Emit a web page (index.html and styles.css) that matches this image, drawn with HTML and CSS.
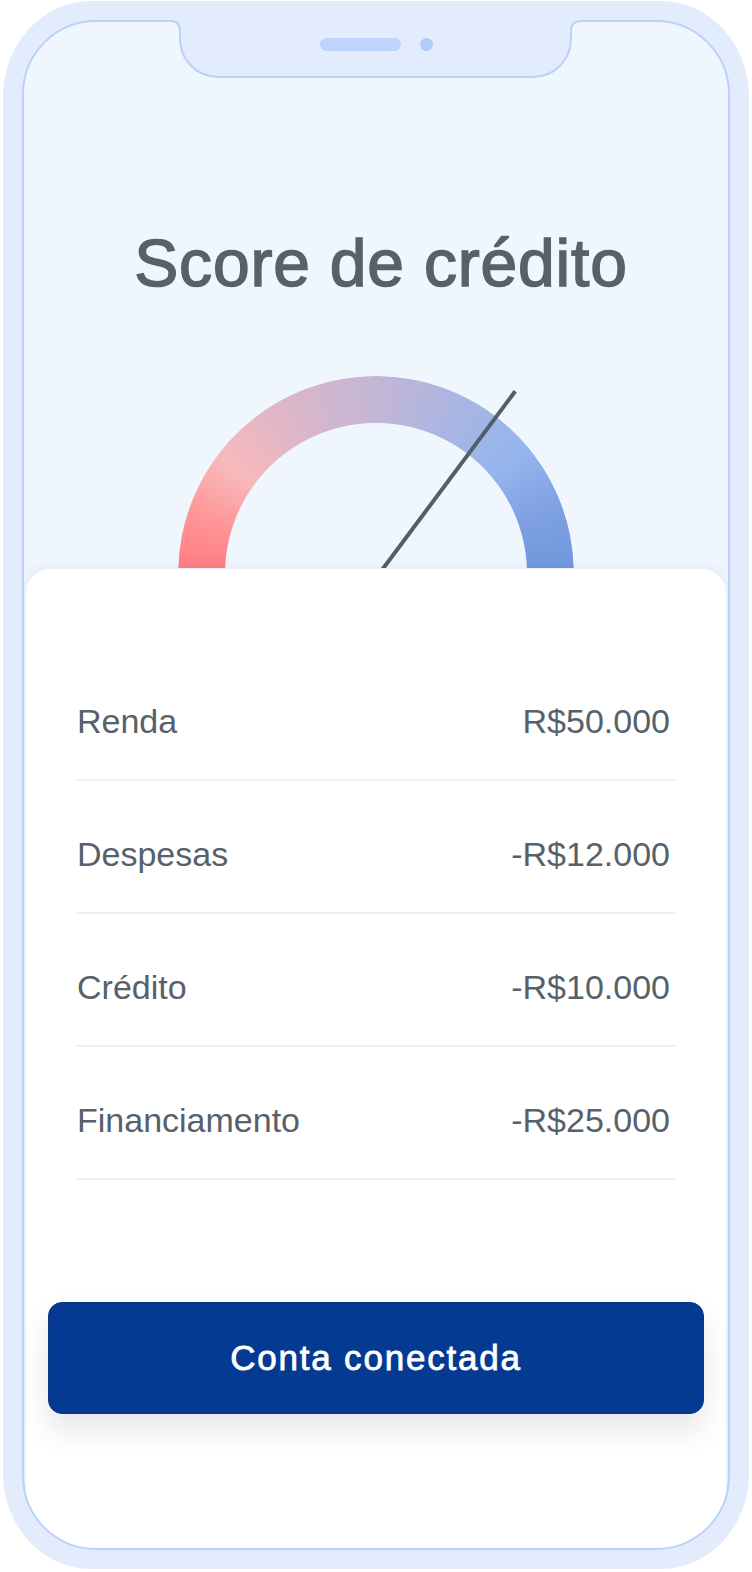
FILE: index.html
```html
<!DOCTYPE html>
<html lang="pt-BR">
<head>
    <meta charset="UTF-8">
    <meta name="viewport" content="width=device-width, initial-scale=1.0">
    <title>Score de crédito</title>
    <link rel="stylesheet" href="styles.css">
</head>
<body>
    <div class="phone">
        <!-- notch with speaker and camera -->
        <svg class="notch" width="432" height="80" viewBox="160 0 432 80">
            <path d="M162,2 H590 V21 H581 Q571,21 571,31 V38 C571,60 555,77 532,77 H219 C196,77 180,60 180,38 V31 Q180,21 170,21 H162 Z" fill="#e2ecfd"/>
            <path d="M160,21 H170 Q180,21 180,31 V38 C180,60 196,77 219,77 H532 C555,77 571,60 571,38 V31 Q571,21 581,21 H592" fill="none" stroke="#b9d2fa" stroke-width="2"/>
            <rect x="320" y="38" width="81" height="13" rx="6.5" fill="#bdd5fb"/>
            <circle cx="426.5" cy="44.5" r="6.5" fill="#b1cbf9"/>
        </svg>

        <div class="screen">
            <h1 class="title">Score de crédito</h1>

            <div class="gauge">
                <div class="gauge-ring"></div>
                <div class="gauge-needle"></div>
            </div>

            <div class="card">
                <ul class="summary">
                    <li class="summary-row">
                        <span class="summary-label">Renda</span>
                        <span class="summary-value">R$50.000</span>
                    </li>
                    <li class="summary-row">
                        <span class="summary-label">Despesas</span>
                        <span class="summary-value">-R$12.000</span>
                    </li>
                    <li class="summary-row">
                        <span class="summary-label">Crédito</span>
                        <span class="summary-value">-R$10.000</span>
                    </li>
                    <li class="summary-row">
                        <span class="summary-label">Financiamento</span>
                        <span class="summary-value">-R$25.000</span>
                    </li>
                </ul>
                <button class="connect">Conta conectada</button>
            </div>
        </div>
    </div>
</body>
</html>
```

FILE: styles.css
```css
body {
    margin: 0;
    background-color: #fff;
    font-family: "Liberation Sans", Arial, sans-serif;
    color: #56616b;
}
.phone {
    position: relative;
    box-sizing: border-box;
    width: 746px;
    height: 1568px;
    margin: 1px 3px 0;
    padding: 19px;
    background-color: #e2ecfd;
    border-radius: 88px / 96px;
}
.notch {
    position: absolute;
    left: 157px;
    top: -1px;
    pointer-events: none;
    z-index: 2;
}
.screen {
    box-sizing: border-box;
    height: 100%;
    display: flex;
    flex-direction: column;
    background-color: #f0f6fe;
    border: 2px solid #b9d2fa;
    border-radius: 74px;
    overflow: hidden;
}
.title {
    margin: 208px 0 0;
    padding-left: 10px;
    text-align: center;
    font-size: 66px;
    line-height: 66px;
    font-weight: normal;
    letter-spacing: 0.8px;
    color: #56616b;
    -webkit-text-stroke: 1.5px #56616b;
}
.gauge {
    position: relative;
    width: 396px;
    height: 192px;
    margin: 80px auto 0;
    overflow: hidden;
}
.gauge-ring {
    width: 396px;
    height: 396px;
    border-radius: 50%;
    background: conic-gradient(from 270deg, #ff7b7f 0deg, #ff9597 18deg, #f8b9bc 36deg, #dcb6c9 62deg, #c3b6d6 90deg, #a8b5e3 118deg, #95b5ec 140deg, #7d9fe2 162deg, #7097dc 180deg, #7097dc 360deg);
    -webkit-mask: radial-gradient(circle at center, transparent 150.5px, #000 151.5px);
    mask: radial-gradient(circle at center, transparent 150.5px, #000 151.5px);
}
.gauge-needle {
    position: absolute;
    left: 199px;
    top: -30px;
    width: 4px;
    height: 228px;
    background-color: #535f68;
    transform-origin: 50% 100%;
    transform: rotate(36.7deg);
}
.card {
    position: relative;
    flex: 1;
    margin: 1px 2px 0;
    padding-top: 79px;
    background-color: #fff;
    border-radius: 24px 24px 0 0;
    box-shadow: 0 -2px 12px rgba(70, 90, 130, 0.07);
}
.summary {
    list-style: none;
    margin: 0 51px;
    padding: 0;
}
.summary-row {
    display: flex;
    justify-content: space-between;
    padding: 53px 0 38px;
    font-size: 34px;
    line-height: 40px;
    border-bottom: 2px solid #eeeff0;
}
.summary-value {
    padding-right: 5px;
}
.connect {
    display: block;
    box-sizing: border-box;
    width: calc(100% - 44px);
    height: 112px;
    margin: 122px 22px 0;
    padding: 0;
    background-color: #043a92;
    border: 1px solid #0a347f;
    border-radius: 14px;
    color: #fff;
    font-family: "Liberation Sans", Arial, sans-serif;
    font-size: 35px;
    letter-spacing: 1.8px;
    -webkit-text-stroke: 0.8px #fff;
    box-shadow: 0 16px 30px rgba(0, 0, 0, 0.1);
    cursor: pointer;
}
```
